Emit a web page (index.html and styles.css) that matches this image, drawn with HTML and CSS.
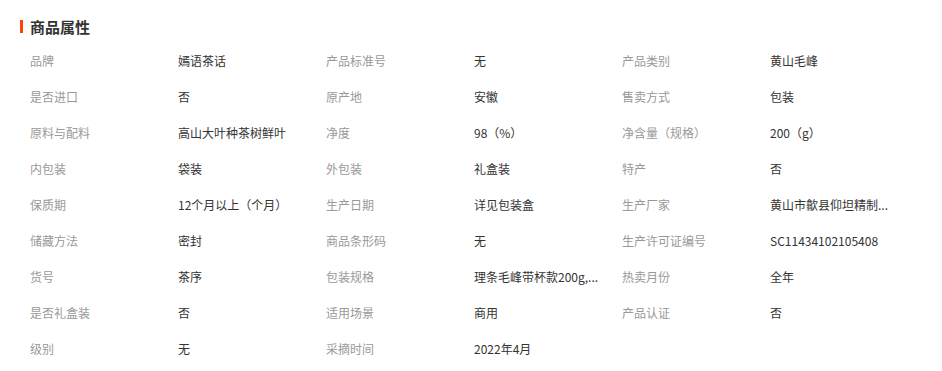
FILE: index.html
```html
<!DOCTYPE html>
<html lang="zh-CN">
<head>
<meta charset="utf-8">
<title>商品属性</title>
<link rel="stylesheet" href="styles.css">
</head>
<body>
<section class="attrs">
  <h2 class="attrs-title"><span class="bar"></span>商品属性</h2>
  <div class="attrs-grid">
    <div class="k">品牌</div><div class="v">嫣语茶话</div>
    <div class="k">产品标准号</div><div class="v">无</div>
    <div class="k">产品类别</div><div class="v">黄山毛峰</div>

    <div class="k">是否进口</div><div class="v">否</div>
    <div class="k">原产地</div><div class="v">安徽</div>
    <div class="k">售卖方式</div><div class="v">包装</div>

    <div class="k">原料与配料</div><div class="v">高山大叶种茶树鲜叶</div>
    <div class="k">净度</div><div class="v">98（%）</div>
    <div class="k">净含量（规格）</div><div class="v">200（g）</div>

    <div class="k">内包装</div><div class="v">袋装</div>
    <div class="k">外包装</div><div class="v">礼盒装</div>
    <div class="k">特产</div><div class="v">否</div>

    <div class="k">保质期</div><div class="v">12个月以上（个月）</div>
    <div class="k">生产日期</div><div class="v">详见包装盒</div>
    <div class="k">生产厂家</div><div class="v">黄山市歙县仰坦精制...</div>

    <div class="k">储藏方法</div><div class="v">密封</div>
    <div class="k">商品条形码</div><div class="v">无</div>
    <div class="k">生产许可证编号</div><div class="v">SC11434102105408</div>

    <div class="k">货号</div><div class="v">茶序</div>
    <div class="k">包装规格</div><div class="v">理条毛峰带杯款200g,...</div>
    <div class="k">热卖月份</div><div class="v">全年</div>

    <div class="k">是否礼盒装</div><div class="v">否</div>
    <div class="k">适用场景</div><div class="v">商用</div>
    <div class="k">产品认证</div><div class="v">否</div>

    <div class="k">级别</div><div class="v">无</div>
    <div class="k">采摘时间</div><div class="v">2022年4月</div>
  </div>
</section>
</body>
</html>
```
FILE: styles.css
```css
html, body {
  margin: 0;
  padding: 0;
  background: #fff;
}
body {
  font-family: "Microsoft YaHei", "Noto Sans CJK SC", "Liberation Sans", sans-serif;
  font-size: 12px;
  color: #333;
}
.attrs {
  padding: 12px 20px 0 20px;
}
.attrs-title {
  display: flex;
  align-items: center;
  margin: 0;
  height: 28px;
  font-size: 15px;
  font-weight: bold;
  color: #333;
}
.bar {
  display: inline-block;
  width: 3px;
  height: 13px;
  background: #ff4400;
  margin-right: 7px;
}
.attrs-grid {
  display: grid;
  grid-template-columns: repeat(3, 148px 148px);
  grid-auto-rows: 36px;
  margin-top: 3px;
  padding-left: 10px;
}
.k, .v {
  line-height: 36px;
  white-space: nowrap;
}
.k {
  color: #999;
}
.v {
  color: #333;
}
```
